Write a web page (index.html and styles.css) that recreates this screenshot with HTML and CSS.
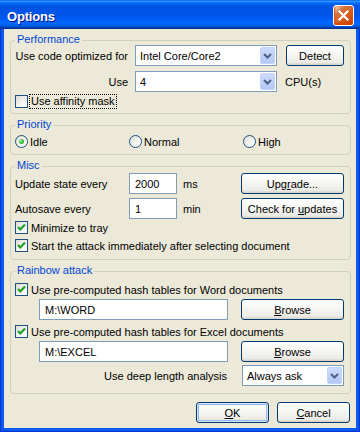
FILE: index.html
```html
<!DOCTYPE html>
<html lang="en">
<head>
    <meta charset="UTF-8">
    <meta name="viewport" content="width=device-width, initial-scale=1.0">
    <title>Options</title>
    <link rel="stylesheet" href="styles.css">
</head>
<body>

    <div class="window">
        <div class="titlebar">
            <span class="title">Options</span>
            <span class="close">
                <svg width="11" height="11" viewBox="0 0 11 11"><path d="M1.5 1.5 L9.5 9.5 M9.5 1.5 L1.5 9.5" stroke="#fff" stroke-width="2.2" stroke-linecap="square"/></svg>
            </span>
        </div>

        <div class="frame">
            <div class="client">

                <!-- Performance -->
                <div class="group">
                    <div class="group-title">Performance</div>
                    <div class="perf-grid">
                        <span class="lbl right">Use code optimized for</span>
                        <div class="combo">
                            <span class="combo-text">Intel Core/Core2</span>
                            <span class="drop"><svg width="9" height="6" viewBox="0 0 9 6"><path d="M1 1 L4.5 4.5 L8 1" fill="none" stroke="#4D6185" stroke-width="2"/></svg></span>
                        </div>
                        <button class="btn btn-detect">Detect</button>

                        <span class="lbl right">Use</span>
                        <div class="combo">
                            <span class="combo-text">4</span>
                            <span class="drop"><svg width="9" height="6" viewBox="0 0 9 6"><path d="M1 1 L4.5 4.5 L8 1" fill="none" stroke="#4D6185" stroke-width="2"/></svg></span>
                        </div>
                        <span class="lbl unit-cpu">CPU(s)</span>
                    </div>
                    <div class="check check-first">
                        <span class="box"></span>
                        <span class="focus">Use affinity mask</span>
                    </div>
                </div>

                <!-- Priority -->
                <div class="group group-priority">
                    <div class="group-title">Priority</div>
                    <div class="radios">
                        <div class="radio"><span class="circle on"></span>Idle</div>
                        <div class="radio"><span class="circle"></span>Normal</div>
                        <div class="radio"><span class="circle"></span>High</div>
                    </div>
                </div>

                <!-- Misc -->
                <div class="group group-misc">
                    <div class="group-title">Misc</div>
                    <div class="misc-grid">
                        <span class="lbl">Update state every</span>
                        <input class="edit" type="text" value="2000">
                        <span class="lbl unit">ms</span>
                        <button class="btn">Upg<u>r</u>ade...</button>

                        <span class="lbl">Autosave every</span>
                        <input class="edit" type="text" value="1">
                        <span class="lbl unit">min</span>
                        <button class="btn">Check for <u>u</u>pdates</button>
                    </div>
                    <div class="check check-misc">
                        <span class="box checked"><svg width="11" height="11" viewBox="0 0 11 11"><path d="M2 5 L4.3 7.5 L9 2.5" fill="none" stroke="#21A121" stroke-width="2.2"/></svg></span>
                        <span class="text">Minimize to tray</span>
                    </div>
                    <div class="check check-misc2">
                        <span class="box checked"><svg width="11" height="11" viewBox="0 0 11 11"><path d="M2 5 L4.3 7.5 L9 2.5" fill="none" stroke="#21A121" stroke-width="2.2"/></svg></span>
                        <span class="text">Start the attack immediately after selecting document</span>
                    </div>
                </div>

                <!-- Rainbow attack -->
                <div class="group group-rainbow">
                    <div class="group-title">Rainbow attack</div>
                    <div class="check check-rb">
                        <span class="box checked"><svg width="11" height="11" viewBox="0 0 11 11"><path d="M2 5 L4.3 7.5 L9 2.5" fill="none" stroke="#21A121" stroke-width="2.2"/></svg></span>
                        <span class="text">Use pre-computed hash tables for Word documents</span>
                    </div>
                    <div class="path-row">
                        <input class="edit" type="text" value="M:\WORD">
                        <button class="btn"><u>B</u>rowse</button>
                    </div>
                    <div class="check check-rb2">
                        <span class="box checked"><svg width="11" height="11" viewBox="0 0 11 11"><path d="M2 5 L4.3 7.5 L9 2.5" fill="none" stroke="#21A121" stroke-width="2.2"/></svg></span>
                        <span class="text">Use pre-computed hash tables for Excel documents</span>
                    </div>
                    <div class="path-row">
                        <input class="edit" type="text" value="M:\EXCEL">
                        <button class="btn"><u>B</u>rowse</button>
                    </div>
                    <div class="deep-row">
                        <span class="lbl">Use deep length analysis</span>
                        <div class="combo">
                            <span class="combo-text">Always ask</span>
                            <span class="drop"><svg width="9" height="6" viewBox="0 0 9 6"><path d="M1 1 L4.5 4.5 L8 1" fill="none" stroke="#4D6185" stroke-width="2"/></svg></span>
                        </div>
                    </div>
                </div>

                <div class="footer">
                    <button class="btn btn-main btn-default"><u>O</u>K</button>
                    <button class="btn btn-main"><u>C</u>ancel</button>
                </div>

            </div>
        </div>
    </div>

</body>
</html>
```

FILE: styles.css
```css
/* XP style dialog */
* {
    box-sizing: border-box;
}

body {
    margin: 0;
    font-family: 'Liberation Sans', Arial, sans-serif;
    font-size: 11px;
    color: #000;
}

.window {
    width: 360px;
    height: 432px;
    display: flex;
    flex-direction: column;
}

.titlebar {
    height: 29px;
    flex: none;
    display: flex;
    align-items: center;
    justify-content: space-between;
    padding: 2px 6px 0 7px;
    background: linear-gradient(to bottom, #0058EE 0%, #3593FF 4%, #288EFF 6%, #127DFF 8%, #036FFC 10%, #0262EE 14%, #0057E5 20%, #0054E3 24%, #0055EB 56%, #005BF5 66%, #026AFE 76%, #0062EF 86%, #0052D6 92%, #0040AB 94%, #003092 100%);
}

.title {
    margin-top: 1px;
    color: #fff;
    font-weight: bold;
    font-size: 13px;
    letter-spacing: -0.2px;
    text-shadow: 1px 1px #0F1089;
}

.close {
    width: 21px;
    height: 21px;
    display: flex;
    align-items: center;
    justify-content: center;
    border: 1px solid #fff;
    border-radius: 3px;
    background: radial-gradient(circle at 90% 90%, #CC4600 0%, #DC6527 55%, #CD7546 70%, #FFCCB2 90%, #fff 100%);
    box-shadow: inset 0 -1px 2px 1px #DA4600;
}

.frame {
    flex: 1;
    padding: 0 4px 4px;
    background: #0A5BEA;
    border-left: 1px solid #0831D9;
    border-right: 1px solid #0831D9;
    border-bottom: 1px solid #0831D9;
    display: flex;
}

.frame .client {
    margin: 0 -1px -1px;
}

.client {
    flex: 1;
    background: #ECE9D8;
    padding: 11px 5px 0 6px;
}

/* group boxes */
.group {
    border: 1px solid #D0D0BF;
    border-radius: 4px;
    padding: 0 5px 4px 4px;
}

.group + .group {
    margin-top: 11px;
}

.group-title {
    width: fit-content;
    margin-top: -8px;
    padding: 0 2px;
    line-height: 13px;
    color: #0046D5;
    background: #ECE9D8;
}

.lbl {
    white-space: nowrap;
}

.right {
    text-align: right;
}

/* combo box */
.combo {
    height: 21px;
    display: flex;
    align-items: center;
    padding: 1px;
    background: #fff;
    border: 1px solid #7F9DB9;
}

.combo-text {
    flex: 1;
    padding-left: 3px;
    white-space: nowrap;
}

.drop {
    width: 15px;
    height: 17px;
    display: flex;
    align-items: center;
    justify-content: center;
    border-radius: 2px;
    background: linear-gradient(to bottom, #CCDBFD, #B4C8F6);
    border: 1px solid #C3D3FD;
}

/* buttons */
.btn {
    height: 21px;
    padding: 0;
    font-family: inherit;
    font-size: 11px;
    color: #000;
    border: 1px solid #003C74;
    border-radius: 3px;
    background: linear-gradient(to bottom, #FFFFFF 0%, #F7F7F4 40%, #ECEBE6 86%, #D6D0C5 100%);
    white-space: nowrap;
}

.btn u {
    text-decoration: underline;
}

.edit {
    height: 21px;
    margin: 0;
    padding: 0 0 0 5px;
    font-family: inherit;
    font-size: 11px;
    color: #000;
    background: #fff;
    border: 1px solid #7F9DB9;
    outline: none;
}

/* performance */
.perf-grid {
    display: grid;
    grid-template-columns: 113px 142px 60px;
    grid-auto-rows: 21px;
    column-gap: 7px;
    row-gap: 5px;
    align-items: center;
    margin-top: -1px;
}

.btn-detect {
    width: 58px;
    justify-self: end;
}

.unit-cpu {
    margin-left: 1px;
}

/* check boxes */
.check {
    display: flex;
    align-items: center;
    height: 15px;
    white-space: nowrap;
}

.check-first {
    margin-top: 2px;
}

.box {
    width: 13px;
    height: 13px;
    flex: none;
    display: flex;
    align-items: center;
    justify-content: center;
    border: 1px solid #1C5180;
    background: linear-gradient(135deg, #DCDCD7 0%, #F5F5F2 60%, #FFFFFF 100%);
}

.focus {
    margin-left: 1px;
    padding: 0 1px;
    line-height: 13px;
    border: 1px dotted #000;
}

.check .text {
    margin-left: 3px;
}

/* radios */
.group-priority {
    padding-bottom: 6px;
}

.radios {
    display: grid;
    grid-template-columns: 114px 114px 1fr;
    margin-top: 4px;
    height: 13px;
}

.radio {
    display: flex;
    align-items: center;
}

.circle {
    width: 13px;
    height: 13px;
    margin-right: 2px;
    border-radius: 50%;
    border: 1px solid #1C5180;
    background: linear-gradient(135deg, #DCDCD7 0%, #F5F5F2 60%, #FFFFFF 100%);
    display: flex;
    align-items: center;
    justify-content: center;
}

.circle.on::after {
    content: "";
    width: 5px;
    height: 5px;
    border-radius: 50%;
    background: radial-gradient(circle at 35% 35%, #A0F0A0 0%, #3DBF3D 50%, #1E8E1E 100%);
}

/* misc */
.group-misc {
    padding-bottom: 6px;
}

.misc-grid {
    display: grid;
    grid-template-columns: 114px 48px 64px 103px;
    grid-auto-rows: 21px;
    row-gap: 4px;
    align-items: center;
    margin-top: 1px;
}

.unit {
    padding-left: 6px;
}

.check-misc {
    margin-top: 1px;
}

.check-misc2 {
    margin-top: 3px;
}

/* rainbow */
.group-rainbow {
    padding-bottom: 7px;
}

.check-rb {
    margin-top: 5px;
}

.check-rb2 {
    margin-top: 4px;
}

.path-row {
    display: grid;
    grid-template-columns: 189px 103px;
    column-gap: 13px;
    margin: 2px 0 0 24px;
}

.deep-row {
    display: grid;
    grid-template-columns: 212px 102px;
    column-gap: 15px;
    align-items: center;
    margin-top: 3px;
}

.deep-row .lbl {
    text-align: right;
}

/* footer */
.footer {
    display: flex;
    justify-content: flex-end;
    gap: 8px;
    margin: 8px 1px 0 0;
}

.btn-main {
    width: 73px;
}

.btn-default {
    box-shadow: inset 0 0 0 1px #CEE7FF, inset 0 0 0 2px #98B8EA;
}
```
